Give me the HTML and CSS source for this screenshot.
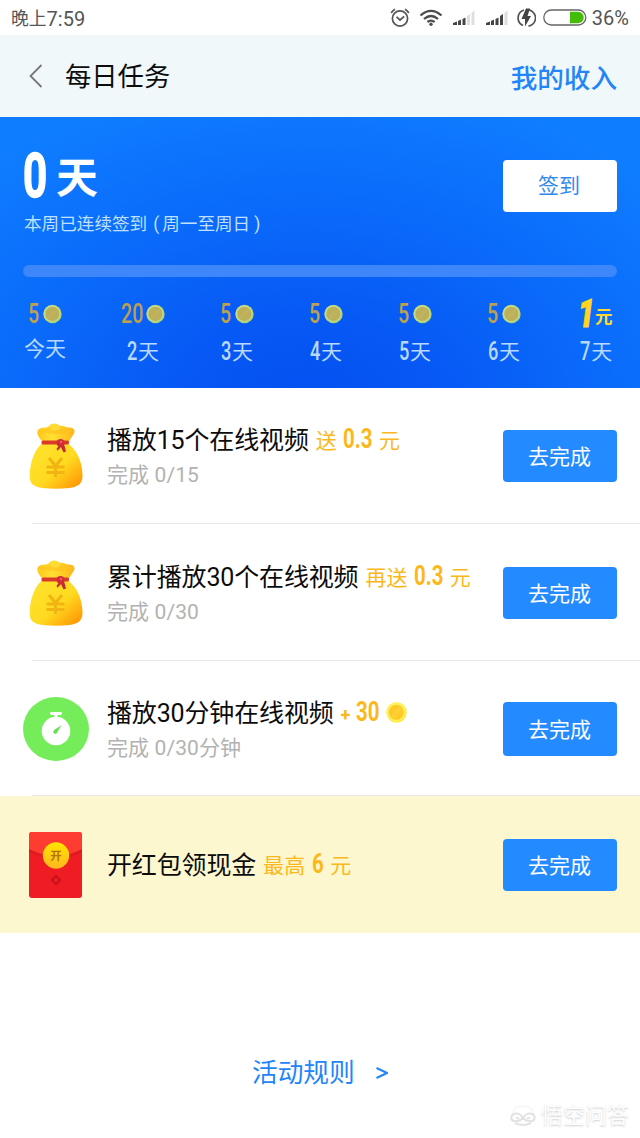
FILE: index.html
```html
<!DOCTYPE html>
<html lang="zh-CN">
<head>
<meta charset="utf-8">
<title>每日任务</title>
<link rel="stylesheet" href="styles.css">
</head>
<body>
<svg class="defs" width="0" height="0" aria-hidden="true">
  <defs>
    <linearGradient id="bagFill" x1="0" y1="0" x2="1" y2="1">
      <stop offset="0" stop-color="#ffe42e"/><stop offset=".55" stop-color="#ffda20"/><stop offset="1" stop-color="#ff8c00"/>
    </linearGradient>
    <linearGradient id="neckFill" x1="0" y1="0" x2="1" y2="0">
      <stop offset="0" stop-color="#ffc719"/><stop offset=".4" stop-color="#ffe133"/><stop offset="1" stop-color="#ffb51a"/>
    </linearGradient>
    <linearGradient id="sealFill" x1="0" y1="0" x2="0" y2="1">
      <stop offset="0" stop-color="#ffe500"/><stop offset="1" stop-color="#ffb620"/>
    </linearGradient>
    <symbol id="coin" viewBox="0 0 20 20">
      <circle cx="10" cy="10" r="9.7" fill="#ffe92e"/>
      <circle cx="9.6" cy="9.5" r="9" fill="#fff25c"/>
      <circle cx="9.8" cy="9.8" r="7.2" fill="#ffc928"/>
      <path d="M4.500 13 12.500 4.200l2.800 2L7.500 15.600z" fill="#ffe04a" opacity=".3"/>
    </symbol>
    <symbol id="dimcoin" viewBox="0 0 20 20">
      <circle cx="10" cy="10" r="9.7" fill="#a5cf79"/>
      <circle cx="9.6" cy="9.6" r="8.9" fill="#c6df88"/>
      <circle cx="9.9" cy="9.900" r="7.500" fill="#bcb05c"/>
      <path d="M4.600 13 13 4.400l2.700 2L7.500 15.800z" fill="#c9bb5e" opacity=".35"/>
    </symbol>
    <symbol id="bag" viewBox="0 0 54 66">
      <path d="M14 20C12 16 7.500 13 8.500 8C11 3.500 16 5 19 4C22-.5 28-.3 31 3C35 2 37 5 41 4.500C46 5 46.500 9 44 12L39 20Z" fill="url(#neckFill)"/>
      <path d="M10 8c3-3 6 0 8-2s4-4 7-2 4 2 6 1 4 1 6 1 4 0 5 2c-3 4-6 2-8 4-4-2-7 0-9-1s-4 1-6-1-6 2-9-2z" fill="#ffc21c" opacity=".65"/>
      <ellipse cx="26" cy="4.500" rx="5" ry="3" fill="#ffdc35"/>
      <path d="M13.500 20h25c8 6 15 17 15 33 0 8-5 11-13 12-9 1-18 1-27 0C5 64 .5 61 .7 53 1 38 6 26 13.500 20Z" fill="url(#bagFill)"/>
      <rect x="12.500" y="17.500" width="27.500" height="4" rx="1.500" fill="#da3a2a"/>
      <path d="m31 21-3.500 5 1 1.800L32 24l2.500 5.500 2.500-1L35 21z" fill="#c52832"/>
      <circle cx="31.500" cy="19.800" r="3.900" fill="#d22c37"/>
      <circle cx="32" cy="19" r="1.300" fill="#ee5f57"/>
      <g fill="none" stroke="#f2b411" stroke-width="3"><path d="m20 35 6.500 8L33 35M26.500 42v12M17.500 44h18M17.500 49.500h18"/></g>
    </symbol>
  </defs>
</svg>

<div class="status">
  <span class="status-time">晚上<span class="clock">7:59</span></span>
  <div class="status-icons">
    <svg width="20" height="20" viewBox="0 0 20 20" fill="none" stroke="#555" stroke-width="1.700"><circle cx="10" cy="10.500" r="7.600"/><path d="M6.500 8.800 10 12l4.200-3.600M1.200 5A9 9 0 0 1 5 1.300M18.800 5A9 9 0 0 0 15 1.300"/></svg>
    <svg class="wifi" width="24" height="18" viewBox="0 0 24 18" fill="none" stroke="#4c4c4c" stroke-width="2.300"><path d="M1.500 6.500Q12-2.800 22.500 6.500M5 10Q12 4 19 10M8.400 13Q12 10.200 15.600 13"/><circle cx="12" cy="15.300" r="1.700" fill="#4c4c4c" stroke="none"/></svg>
    <svg class="signal" width="23" height="17" viewBox="0 0 23 17" fill="#444"><path d="M1 16v-2l4-1.500V16zM6 12l3-1.500V16H6zM10.500 10l3-1.500V16h-3z"/><path fill="#dedede" d="m15 7 3-2v11h-3zM19.500 4 22.500 1v15h-3z"/></svg>
    <svg class="signal" width="23" height="17" viewBox="0 0 23 17" fill="#444"><path d="M1 16v-2l4-1.500V16zM6 12l3-1.500V16H6zM10.500 10l3-1.500V16h-3zM15 7l3-2v11h-3z"/><path fill="#dedede" d="M19.500 4 22.500 1v15h-3z"/></svg>
    <svg class="charge" width="19" height="20" viewBox="0 0 19 20"><path d="M7 2A8.300 8.300 0 0 0 6 17.500M12 1.900A8.300 8.300 0 0 1 11.500 18.200" fill="none" stroke="#555" stroke-width="1.700"/><path d="M9 .5 4.500 11H8v7.500L14 8h-3.500L13 .5z" fill="#444"/></svg>
    <svg class="battery" width="44" height="17" viewBox="0 0 44 17"><rect x=".8" y="1" width="42" height="15" rx="7.500" fill="#fff" stroke="#666" stroke-width="1.300"/><path d="M27 2.800h8a5.700 5.700 0 0 1 0 11.400h-8z" fill="#45bd08"/></svg>
    <span class="status-pct">36%</span>
  </div>
</div>

<header class="nav">
  <svg class="back" width="14" height="24" viewBox="0 0 14 24" fill="none" stroke="#777" stroke-width="1.800"><path d="M12.500 1 1.500 12l11 11"/></svg>
  <h1 class="nav-title">每日任务</h1>
  <a class="nav-link">我的收入</a>
</header>

<section class="hero">
  <div class="hero-top">
    <div class="streak">
      <div class="streak-count">
        <span class="slot big"><span class="num">0</span></span>
        <span class="streak-unit">天</span>
      </div>
      <p class="streak-note">本周已连续签到<span class="paren-l">(</span>周一至周日<span class="paren-r">)</span></p>
    </div>
    <button class="sign">签到</button>
  </div>
  <div class="bar"></div>
  <div class="days">
    <div class="day today">
      <div class="prize"><span class="slot one"><span class="num">5</span></span><svg width="19" height="20"><use href="#dimcoin"/></svg></div>
      <div class="name">今天</div>
    </div>
    <div class="day">
      <div class="prize"><span class="slot two"><span class="num">20</span></span><svg width="19" height="20"><use href="#dimcoin"/></svg></div>
      <div class="name"><span class="slot one"><span class="num">2</span></span>天</div>
    </div>
    <div class="day">
      <div class="prize"><span class="slot one"><span class="num">5</span></span><svg width="19" height="20"><use href="#dimcoin"/></svg></div>
      <div class="name"><span class="slot one"><span class="num">3</span></span>天</div>
    </div>
    <div class="day">
      <div class="prize"><span class="slot one"><span class="num">5</span></span><svg width="19" height="20"><use href="#dimcoin"/></svg></div>
      <div class="name"><span class="slot one"><span class="num">4</span></span>天</div>
    </div>
    <div class="day">
      <div class="prize"><span class="slot one"><span class="num">5</span></span><svg width="19" height="20"><use href="#dimcoin"/></svg></div>
      <div class="name"><span class="slot one"><span class="num">5</span></span>天</div>
    </div>
    <div class="day">
      <div class="prize"><span class="slot one"><span class="num">5</span></span><svg width="19" height="20"><use href="#dimcoin"/></svg></div>
      <div class="name"><span class="slot one"><span class="num">6</span></span>天</div>
    </div>
    <div class="day last">
      <div class="prize jackpot"><span class="jackpot-num">1</span><span class="jackpot-unit">元</span></div>
      <div class="name"><span class="slot one"><span class="num">7</span></span>天</div>
    </div>
  </div>
</section>

<main class="tasks">
  <div class="task first">
    <svg class="icon" width="54" height="66"><use href="#bag"/></svg>
    <div class="info">
      <div class="title">播放15个在线视频<span class="reward">送<span class="slot amount"><span class="num">0.3</span></span>元</span></div>
      <div class="sub">完成 0/15</div>
    </div>
    <button class="go">去完成</button>
  </div>
  <div class="line"></div>
  <div class="task second">
    <svg class="icon" width="54" height="66"><use href="#bag"/></svg>
    <div class="info">
      <div class="title">累计播放30个在线视频<span class="reward">再送<span class="slot amount"><span class="num">0.3</span></span>元</span></div>
      <div class="sub">完成 0/30</div>
    </div>
    <button class="go">去完成</button>
  </div>
  <div class="line"></div>
  <div class="task timed">
    <svg class="icon" width="66" height="64" viewBox="0 0 66 64"><ellipse cx="33" cy="32" rx="33" ry="32" fill="#75ed5b"/><circle cx="33" cy="34" r="14.300" fill="#fff"/><path d="M28 15h10q1 0 1 1.200T38 18h-3.500v3h-3v-3H28q-1-.5-1-1.800T28 15z" fill="#fff"/><path d="M38.500 28 31 33.300a2 2 0 1 0 3.300 1.700z" fill="#65df4c"/></svg>
    <div class="info">
      <div class="title">播放30分钟在线视频<span class="reward"><span class="plus">+</span><span class="slot thirty"><span class="num">30</span></span><svg class="coin" width="21" height="23"><use href="#coin"/></svg></span></div>
      <div class="sub">完成 0/30分钟</div>
    </div>
    <button class="go">去完成</button>
  </div>
  <div class="line"></div>
  <div class="task packet">
    <svg class="icon" width="53" height="66" viewBox="0 0 53 66"><rect width="53" height="66" rx="3" fill="#ef1c23"/><path d="M0 17V3q0-3 3-3h47q3 0 3 3v14Q27 31 0 17Z" fill="#ff3c31"/><path d="M0 17q26 15 53 0v3q-26 14-53 0z" fill="#d91a20" opacity=".7"/><circle cx="27" cy="23.500" r="13.200" fill="url(#sealFill)"/><text class="seal" x="27" y="27.800" font-size="11.500" text-anchor="middle">开</text><path d="m27 44 4 4-4 4-4-4z" fill="none" stroke="#c9131b" stroke-width="2.200"/></svg>
    <div class="info">
      <div class="title">开红包领现金<span class="reward">最高<span class="slot six"><span class="num">6</span></span>元</span></div>
    </div>
    <button class="go">去完成</button>
  </div>
</main>

<footer class="footer">
  <a class="rules">活动规则<svg class="more" width="12" height="14" viewBox="0 0 12 14" fill="none" stroke="#2385f8" stroke-width="2"><path d="m.5 2 10.500 5-10.500 5"/></svg></a>
  <div class="mark">
    <svg width="28" height="24" viewBox="0 0 28 24" fill="none" stroke="#e2e2e2" stroke-width="2"><path d="M4 10C4 4 9 2 14 2s10 2 10 8" stroke="#f7f7f7"/><path d="M14 14c-2-4-6-5-9-4s-4 6 0 7 7-1 9-3c2 2 5 4 9 3s3-6 0-7-7 0-9 4z"/><path d="M6 19q8 4 16 0M7 14h3M18 14h3"/></svg>
    <span>悟空问答</span>
  </div>
</footer>
</body>
</html>
```

FILE: styles.css
```css
* { box-sizing: border-box; }
body {
  margin: 0;
  width: 640px;
  height: 1138px;
  display: flex;
  flex-direction: column;
  overflow: hidden;
  background: #fff;
  color: #0c0c0c;
  font-family: Roboto, "Noto Sans CJK SC", sans-serif;
}
svg { display: block; flex: none; }
.defs { position: absolute; }
button { border: 0; padding: 0; font-family: inherit; }

/* Condensed numerals: the slot holds the narrowed width of the scaled digits. */
.slot { display: block; flex: none; height: 30px; line-height: 30px; white-space: nowrap; }
.num { display: inline-block; transform: scaleX(.7); transform-origin: 0 50%; font-family: Roboto, sans-serif; font-weight: 500; letter-spacing: 0; }

.status { height: 35px; display: flex; justify-content: space-between; align-items: center; padding: 0 11px; color: #555; }
.status-time { display: flex; align-items: center; font-size: 17.800px; line-height: 24px; padding-top: 2px; }
.clock { font-size: 20px; }
.status-icons { display: flex; align-items: center; }
.wifi { margin-left: 9px; }
.signal { margin-left: 9px; }
.signal + .signal { margin-left: 10px; }
.charge { margin-left: 9px; }
.battery { margin-left: 7px; }
.status-pct { margin-left: 5px; font-size: 20px; line-height: 24px; padding-top: 1px; }

.nav { height: 82px; display: flex; align-items: center; padding: 0 23px 0 29px; background: #f0f8fa; }
.nav-title { margin: 0 auto 0 22px; padding-top: 2px; font-size: 26.300px; font-weight: 400; line-height: 40px; }
.nav-link { font-size: 26.600px; font-weight: 500; color: #2385f8; }

.hero {
  height: 271px;
  padding: 33px 23px 0;
  background: radial-gradient(ellipse 430px 300px at 48% 108%, #0350f0 0%, #0758f5 30%, #0a6afa 68%, #0f7dff 110%);
  color: #b8d9ff;
}
.hero-top { height: 115px; display: flex; justify-content: space-between; }
.streak-count { height: 52px; display: flex; align-items: flex-start; color: #fff; }
.big { width: 24px; height: 52px; line-height: 52px; font-size: 61px; -webkit-text-stroke: 1.500px #fff; }
.big .num { font-weight: 700; transform: scaleX(.69); }
.streak-unit { margin-left: 9px; font-size: 42px; font-weight: 700; line-height: 57px; }
.streak-note { margin: 9px 0 0 1px; font-size: 17.600px; line-height: 26px; color: #bfe0ff; white-space: nowrap; }
.paren-l { margin: 0 3px 0 6px; }
.paren-r { margin-left: 4px; }
.sign { width: 114px; height: 52px; margin-top: 10px; border-radius: 4px; background: #fff; color: #3089ec; font-size: 21px; padding: 0 2px 4px 0; }
.bar { height: 12px; margin-bottom: 1px; border-radius: 6px; background: #3e87fb; }
.days { display: flex; gap: 55px; padding: 19px 0 0 1px; }
.day { flex: none; display: flex; flex-direction: column; align-items: center; }
.today { width: 42px; }
.prize { height: 34px; display: flex; align-items: center; gap: 4px; color: #bba04f; font-size: 28px; }
.one { width: 11px; }
.two { width: 21px; }
.name { height: 30px; margin-top: 5px; display: flex; align-items: center; font-size: 21px; line-height: 30px; }
.name .slot { font-size: 26px; height: 32px; }
.day .name { padding-top: 2px; }
.today .name { padding: 0; margin-top: 3px; height: 29px; }
.last { margin-left: 4px; }
.jackpot { align-items: flex-start; gap: 0; line-height: 34px; }
.jackpot-num { width: 17px; margin-left: -2px; font-size: 39px; font-weight: 900; font-style: italic; color: #ffd41f; transform: scaleX(.75); transform-origin: 0 50%; -webkit-text-stroke: 1px #ffd41f; }
.jackpot-unit { font-size: 17.500px; font-weight: 700; color: #ffd833; line-height: 40px; }

.task { height: 135px; display: flex; align-items: center; padding: 1px 23px 0 29px; }
.second { height: 136px; padding-top: 2px; }
.info { margin-left: 24px; height: 70px; display: flex; flex-direction: column; }
.title { height: 36px; display: flex; align-items: center; padding-top: 3px; font-size: 25px; letter-spacing: -.15px; line-height: 36px; white-space: nowrap; }
.reward { display: flex; align-items: center; margin-left: 7px; color: #fbb81c; font-size: 21px; letter-spacing: .1px; }
.reward .slot { font-size: 28.500px; }
.reward .num { font-weight: 700; transform: scaleX(.72); }
.amount { width: 30px; margin: -4px 6px 0; }
.sub { height: 34px; padding-top: 1px; font-size: 21px; line-height: 34px; color: #b2b2b2; letter-spacing: .1px; }
.go { width: 114px; height: 52px; margin-left: auto; border-radius: 4px; background: #248aff; color: #fff; font-size: 21px; padding: 0 1px 2px 0; }
.line { height: 1px; margin-left: 32px; background: #e8e8e8; }
.timed { height: 134px; padding: 2px 23px 0; }
.timed .info { margin-left: 18px; }
.timed .go { height: 54px; }
.plus { font-size: 18px; font-weight: 700; padding-top: 2px; }
.thirty { width: 24px; margin: -3px 6px 0 5px; }
.coin { margin-top: -3px; }
.packet { height: 137px; background: #fdf7cf; }
.packet .info { margin-left: 25px; height: 38px; }
.packet .title { padding-top: 4px; }
.six { width: 12px; margin: -4px 6px 0 7px; }
.seal { font-family: "Noto Sans CJK SC", sans-serif; font-weight: 700; fill: #b4730b; }

.footer { flex: 1; display: flex; flex-direction: column; }
.rules { margin: 121px 0 0 252px; display: flex; align-items: center; font-size: 25.700px; line-height: 38px; color: #2385f8; }
.more { margin-left: 21px; }
.mark { margin: 8px 11px 0 auto; display: flex; align-items: center; gap: 4px; font-size: 22px; line-height: 32px; color: #fdfdfd; text-shadow: 0 1px 2px #ccc; }
```
